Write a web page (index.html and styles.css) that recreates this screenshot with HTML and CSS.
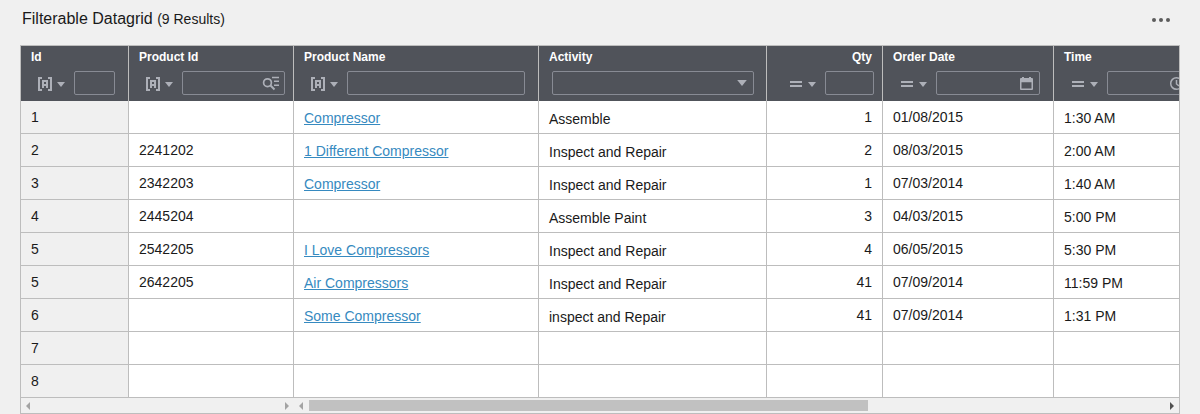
FILE: index.html
```html
<!DOCTYPE html>
<html lang="en">
<head>
<meta charset="utf-8">
<title>Filterable Datagrid</title>
<link rel="stylesheet" href="styles.css">
</head>
<body>
<svg class="sprite" aria-hidden="true">
  <symbol id="contains" viewBox="0 0 18 18">
    <path d="M6 3H3v12h3M12 3h3v12h-3" fill="none" stroke="currentColor" stroke-width="2"/>
    <path d="M7 13V6h4v7M7 10h4" fill="none" stroke="currentColor" stroke-width="2"/>
  </symbol>
  <symbol id="equals" viewBox="0 0 18 18"><path d="M3 6h12v2H3zM3 10h12v2H3z" fill="currentColor"/></symbol>
  <symbol id="caret" viewBox="0 0 8 5"><path d="M0 0h8L4 5z" fill="currentColor"/></symbol>
  <symbol id="lookup" viewBox="0 0 18 18">
    <circle cx="5.500" cy="8.700" r="3.900" fill="none" stroke="currentColor" stroke-width="1.700"/>
    <path d="M8.500 11.500l4 4" stroke="currentColor" stroke-width="2"/>
    <path d="M10 3.500h7M12 7.200h5M12 11.200h5" stroke="currentColor" stroke-width="1.600"/>
  </symbol>
  <symbol id="calendar" viewBox="0 0 18 18">
    <path d="M5 3h2v1h5V3h2v1h1q1 0 1 1v10q0 1-1 1H4q-1 0-1-1V5q0-1 1-1h1zM4.500 8.300v6.200h10V8.300z" fill="currentColor" fill-rule="evenodd"/>
  </symbol>
  <symbol id="clock" viewBox="0 0 18 18">
    <circle cx="9.500" cy="9.500" r="5.800" fill="none" stroke="currentColor" stroke-width="1.500"/>
    <path d="M9.500 6v4l2.500 2" fill="none" stroke="currentColor" stroke-width="1.500"/>
  </symbol>
</svg>

<main class="page">
  <header class="toolbar">
    <h1 class="title">Filterable Datagrid <span class="count">(9 Results)</span></h1>
    <button class="more" type="button" aria-label="More actions"><svg width="18" height="4" viewBox="0 0 18 4"><circle cx="2" cy="2" r="2"/><circle cx="9" cy="2" r="2"/><circle cx="16" cy="2" r="2"/></svg></button>
  </header>

  <section class="datagrid">
    <div class="viewport">
      <table class="grid">
        <colgroup><col class="col-id"><col class="col-product"><col class="col-name"><col class="col-activity"><col class="col-qty"><col class="col-date"><col class="col-time"></colgroup>
        <thead>
          <tr>
            <th scope="col"><label class="heading" for="f-id">Id</label>
              <div class="filter"><button class="operator" type="button" aria-label="Contains"><svg class="icon"><use href="#contains"/></svg><svg class="caret"><use href="#caret"/></svg></button><div class="field"><input id="f-id" type="text"></div></div></th>
            <th scope="col"><label class="heading" for="f-product">Product Id</label>
              <div class="filter snug"><button class="operator" type="button" aria-label="Contains"><svg class="icon"><use href="#contains"/></svg><svg class="caret"><use href="#caret"/></svg></button><div class="field"><input id="f-product" type="text"><svg class="trigger"><use href="#lookup"/></svg></div></div></th>
            <th scope="col"><label class="heading" for="f-name">Product Name</label>
              <div class="filter"><button class="operator" type="button" aria-label="Contains"><svg class="icon"><use href="#contains"/></svg><svg class="caret"><use href="#caret"/></svg></button><div class="field"><input id="f-name" type="text"></div></div></th>
            <th scope="col"><label class="heading" for="f-activity">Activity</label>
              <div class="filter plain"><div class="field"><select id="f-activity"><option></option><option>Assemble</option><option>Inspect and Repair</option></select><svg class="arrow"><use href="#caret"/></svg></div></div></th>
            <th scope="col"><label class="heading end" for="f-qty">Qty</label>
              <div class="filter snug indent"><button class="operator" type="button" aria-label="Equals"><svg class="icon"><use href="#equals"/></svg><svg class="caret"><use href="#caret"/></svg></button><div class="field"><input id="f-qty" type="text"></div></div></th>
            <th scope="col"><label class="heading" for="f-date">Order Date</label>
              <div class="filter"><button class="operator" type="button" aria-label="Equals"><svg class="icon"><use href="#equals"/></svg><svg class="caret"><use href="#caret"/></svg></button><div class="field"><input id="f-date" type="text"><svg class="trigger"><use href="#calendar"/></svg></div></div></th>
            <th scope="col"><label class="heading" for="f-time">Time</label>
              <div class="filter"><button class="operator" type="button" aria-label="Equals"><svg class="icon"><use href="#equals"/></svg><svg class="caret"><use href="#caret"/></svg></button><div class="field"><input id="f-time" type="text"><svg class="trigger"><use href="#clock"/></svg></div></div></th>
          </tr>
        </thead>
        <tbody>
          <tr><td class="id">1</td><td></td><td class="mid"><a href="#">Compressor</a></td><td class="low">Assemble</td><td class="qty">1</td><td>01/08/2015</td><td class="mid">1:30 AM</td></tr>
          <tr><td class="id">2</td><td>2241202</td><td class="mid"><a href="#">1 Different Compressor</a></td><td class="low">Inspect and Repair</td><td class="qty">2</td><td>08/03/2015</td><td class="mid">2:00 AM</td></tr>
          <tr><td class="id">3</td><td>2342203</td><td class="mid"><a href="#">Compressor</a></td><td class="low">Inspect and Repair</td><td class="qty">1</td><td>07/03/2014</td><td class="mid">1:40 AM</td></tr>
          <tr><td class="id">4</td><td>2445204</td><td></td><td class="low">Assemble Paint</td><td class="qty">3</td><td>04/03/2015</td><td class="mid">5:00 PM</td></tr>
          <tr><td class="id">5</td><td>2542205</td><td class="mid"><a href="#">I Love Compressors</a></td><td class="low">Inspect and Repair</td><td class="qty">4</td><td>06/05/2015</td><td class="mid">5:30 PM</td></tr>
          <tr><td class="id">5</td><td>2642205</td><td class="mid"><a href="#">Air Compressors</a></td><td class="low">Inspect and Repair</td><td class="qty">41</td><td>07/09/2014</td><td class="mid">11:59 PM</td></tr>
          <tr><td class="id">6</td><td></td><td class="mid"><a href="#">Some Compressor</a></td><td class="low">inspect and Repair</td><td class="qty">41</td><td>07/09/2014</td><td class="mid">1:31 PM</td></tr>
          <tr><td class="id">7</td><td></td><td></td><td></td><td></td><td></td><td></td></tr>
          <tr><td class="id">8</td><td></td><td></td><td></td><td></td><td></td><td></td></tr>
        </tbody>
      </table>
    </div>
    <div class="scrollbars">
      <div class="scrollbar frozen"><span class="step prev"></span><span class="step next"></span></div>
      <div class="scrollbar"><span class="step prev"></span><div class="track"><div class="thumb"></div></div><span class="step next active"></span></div>
    </div>
  </section>
</main>
</body>
</html>
```
FILE: styles.css
```css
* { box-sizing: border-box; }

body {
  margin: 0;
  background: #f0f0f0;
  color: #1a1a1a;
  font: 14px/18px "Liberation Sans", Arial, sans-serif;
}

button, input, select { font: inherit; }

.sprite { display: none; }

.page { padding: 0 20px; }

.toolbar {
  display: flex;
  align-items: center;
  justify-content: space-between;
  height: 45px;
  padding: 0 6px 8px 2px;
}

.title {
  margin: 0;
  font-size: 16px;
  font-weight: 400;
  line-height: 20px;
}

.count { font-size: 14px; }

.more {
  display: flex;
  padding: 7px 4px 4px;
  border: 0;
  background: none;
  fill: #5c5c5c;
}

.datagrid { border: 1px solid #bdbdbd; }

.viewport { overflow: hidden; }

.grid {
  width: 100%;
  min-width: 1183px;
  table-layout: fixed;
  border-spacing: 0;
}

.col-id { width: 108px; }
.col-product { width: 165px; }
.col-name { width: 245px; }
.col-activity { width: 228px; }
.col-qty { width: 116px; }
.col-date { width: 171px; }

th {
  height: 55px;
  padding: 0;
  border-right: 1px solid #bdbdbd;
  background: #50535a;
  color: #fff;
  font-size: 12px;
  line-height: 14px;
  text-align: left;
  vertical-align: top;
}

.heading {
  display: block;
  padding: 4px 10px 7px;
}

.heading.end { text-align: right; }

.filter {
  display: flex;
  padding: 0 13px 6px 15px;
  color: #adb0b8;
}

.filter.snug { padding-right: 8px; }
.filter.plain { padding-left: 13px; padding-right: 12px; }
.filter.indent { padding-left: 20px; }

.operator {
  display: flex;
  flex: none;
  align-items: center;
  gap: 3px;
  width: 38px;
  height: 24px;
  padding: 2px 0 0;
  border: 0;
  background: none;
  color: inherit;
}

.icon { width: 18px; height: 18px; }
.caret { width: 8px; height: 5px; }

.field {
  display: flex;
  flex: 1;
  align-items: center;
  min-width: 0;
  height: 24px;
  padding-right: 4px;
  border: 1px solid #888b94;
  border-radius: 2px;
}

.field input,
.field select {
  flex: 1;
  width: 0;
  min-width: 0;
  height: 22px;
  padding: 0 4px;
  border: 0;
  outline: 0;
  background: none;
  color: #fff;
  appearance: none;
}

.trigger { flex: none; width: 18px; height: 18px; }
.arrow { flex: none; width: 10px; height: 6px; margin-right: 2px; }

td {
  height: 33px;
  padding: 7px 10px 0;
  border-right: 1px solid #bdbdbd;
  border-bottom: 1px solid #bdbdbd;
  background: #fff;
  vertical-align: top;
  white-space: nowrap;
}

.id { background: #f0f0f0; }
.mid { padding-top: 8px; }
.low { padding-top: 9px; }
.qty { text-align: right; }

a { color: #368ac0; }

.scrollbars { display: flex; }

.scrollbar {
  display: flex;
  flex: 1;
  align-items: center;
  justify-content: space-between;
  height: 15px;
  padding: 0 5px;
}

.frozen { flex: none; width: 273px; }

.step {
  border: 4px solid transparent;
  border-width: 4px 0;
}

.prev { border-right: 4px solid #a3a3a3; }
.next { border-left: 4px solid #a3a3a3; }
.active { border-left-color: #505050; }

.track { flex: 1; margin: 0 6px; }

.thumb {
  width: 65.4%;
  height: 11px;
  background: #c1c1c1;
}
```
